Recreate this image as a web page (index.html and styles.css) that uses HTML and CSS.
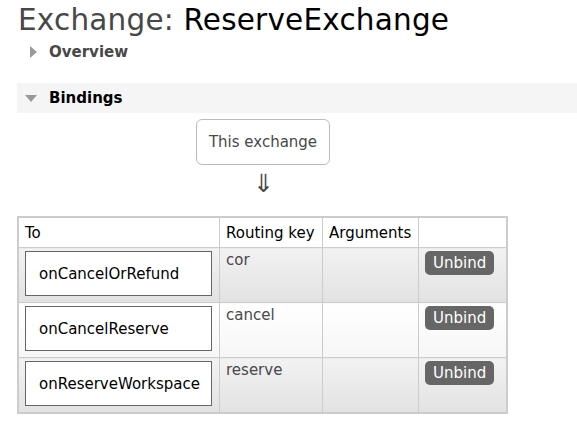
FILE: index.html
```html
<!DOCTYPE html>
<html>
<head>
<meta charset="utf-8">
<link rel="stylesheet" href="styles.css">
</head>
<body>
<h1 class="title">Exchange: <b>ReserveExchange</b></h1>
<div class="section closed">
  <h2 class="section-head"><span class="tri tri-right"></span>Overview</h2>
</div>
<div class="section open">
  <h2 class="section-head bar"><span class="tri tri-down"></span>Bindings</h2>
  <div class="bindings">
    <div class="center-col">
      <div class="this-ex">This exchange</div>
      <div class="arrow">&#8659;</div>
    </div>
    <table class="list">
      <thead>
        <tr><th class="c-to">To</th><th class="c-rk">Routing key</th><th class="c-arg">Arguments</th><th class="c-btn"></th></tr>
      </thead>
      <tbody>
        <tr class="alt1">
          <td><span class="dest">onCancelOrRefund</span></td>
          <td>cor</td><td></td><td><span class="btn">Unbind</span></td>
        </tr>
        <tr class="alt2">
          <td><span class="dest">onCancelReserve</span></td>
          <td>cancel</td><td></td><td><span class="btn">Unbind</span></td>
        </tr>
        <tr class="alt1">
          <td><span class="dest">onReserveWorkspace</span></td>
          <td>reserve</td><td></td><td><span class="btn">Unbind</span></td>
        </tr>
      </tbody>
    </table>
  </div>
</div>
</body>
</html>
```

FILE: styles.css
```css
html, body { margin: 0; padding: 0; background: #fff; }
body {
  font-family: "DejaVu Sans", Verdana, sans-serif;
  color: #484848;
  padding: 0 0 0 17px;
}
.title {
  margin: 0;
  padding-top: 2px;
  padding-left: 1px;
  font-size: 29.5px;
  font-weight: normal;
  color: #484848;
  line-height: 36px;
  letter-spacing: 0.2px;
}
.title b { font-weight: normal; color: #000; }
.section-head {
  margin: 0;
  font-size: 15px;
  font-weight: bold;
  color: #484848;
  display: flex;
  align-items: center;
  height: 30px;
  line-height: 30px;
}
.closed .section-head { padding-left: 12px; margin-top: -1px; }
.open { margin-top: 16px; }
.bar { background: #f5f5f5; padding-left: 8px; color: #000; }
.tri { display: inline-block; width: 0; height: 0; margin-right: 12px; }
.tri-right {
  border-top: 6px solid transparent;
  border-bottom: 6px solid transparent;
  border-left: 7px solid #999;
  margin-left: 1px;
}
.tri-down {
  border-left: 6px solid transparent;
  border-right: 6px solid transparent;
  border-top: 7px solid #999;
  margin-right: 12px;
}
.bindings { padding-top: 6px; }
.center-col {
  width: 491px;
  display: flex;
  flex-direction: column;
  align-items: center;
}
.this-ex {
  border: 1px solid #bbb;
  border-radius: 6px;
  height: 44px;
  line-height: 44px;
  font-size: 15px;
  color: #484848;
  width: 132px;
  text-align: center;
  margin-left: 1px;
}
.arrow {
  font-family: "DejaVu Sans", sans-serif;
  font-size: 25px;
  line-height: 28px;
  margin-top: 5px;
  margin-left: 2px;
  color: #484848;
}
table.list {
  margin-top: 18px;
  border-collapse: collapse;
  border: 2px solid #ccc;
  font-size: 15px;
  color: #484848;
  width: 491px;
}
table.list th {
  font-weight: normal;
  text-align: left;
  color: #000;
  background: #fff;
  height: 29px;
  padding: 0 6px;
  border: 1px solid #ccc;
  vertical-align: middle;
}
table.list td {
  border: 1px solid #ccc;
  padding: 3px 6px;
  vertical-align: top;
  height: 48px;
}
.c-to { width: 188px; }
.c-rk { width: 90px; }
.c-arg { width: 83px; }
tr.alt1 td { background: linear-gradient(#f2f2f2, #e2e2e2); }
tr.alt2 td { background: linear-gradient(#ffffff, #f6f6f6); }
.dest {
  display: block;
  border: 1px solid #666;
  background: #fff;
  height: 43px;
  line-height: 45px;
  padding-left: 13px;
  color: #000;
  width: 172px;
  margin-left: 0;
}
.btn {
  display: inline-block;
  background: #666;
  color: #fff;
  font-weight: normal;
  border-radius: 5px;
  padding: 0 8px;
  height: 24px;
  line-height: 24px;
  font-size: 15px;
}
```
